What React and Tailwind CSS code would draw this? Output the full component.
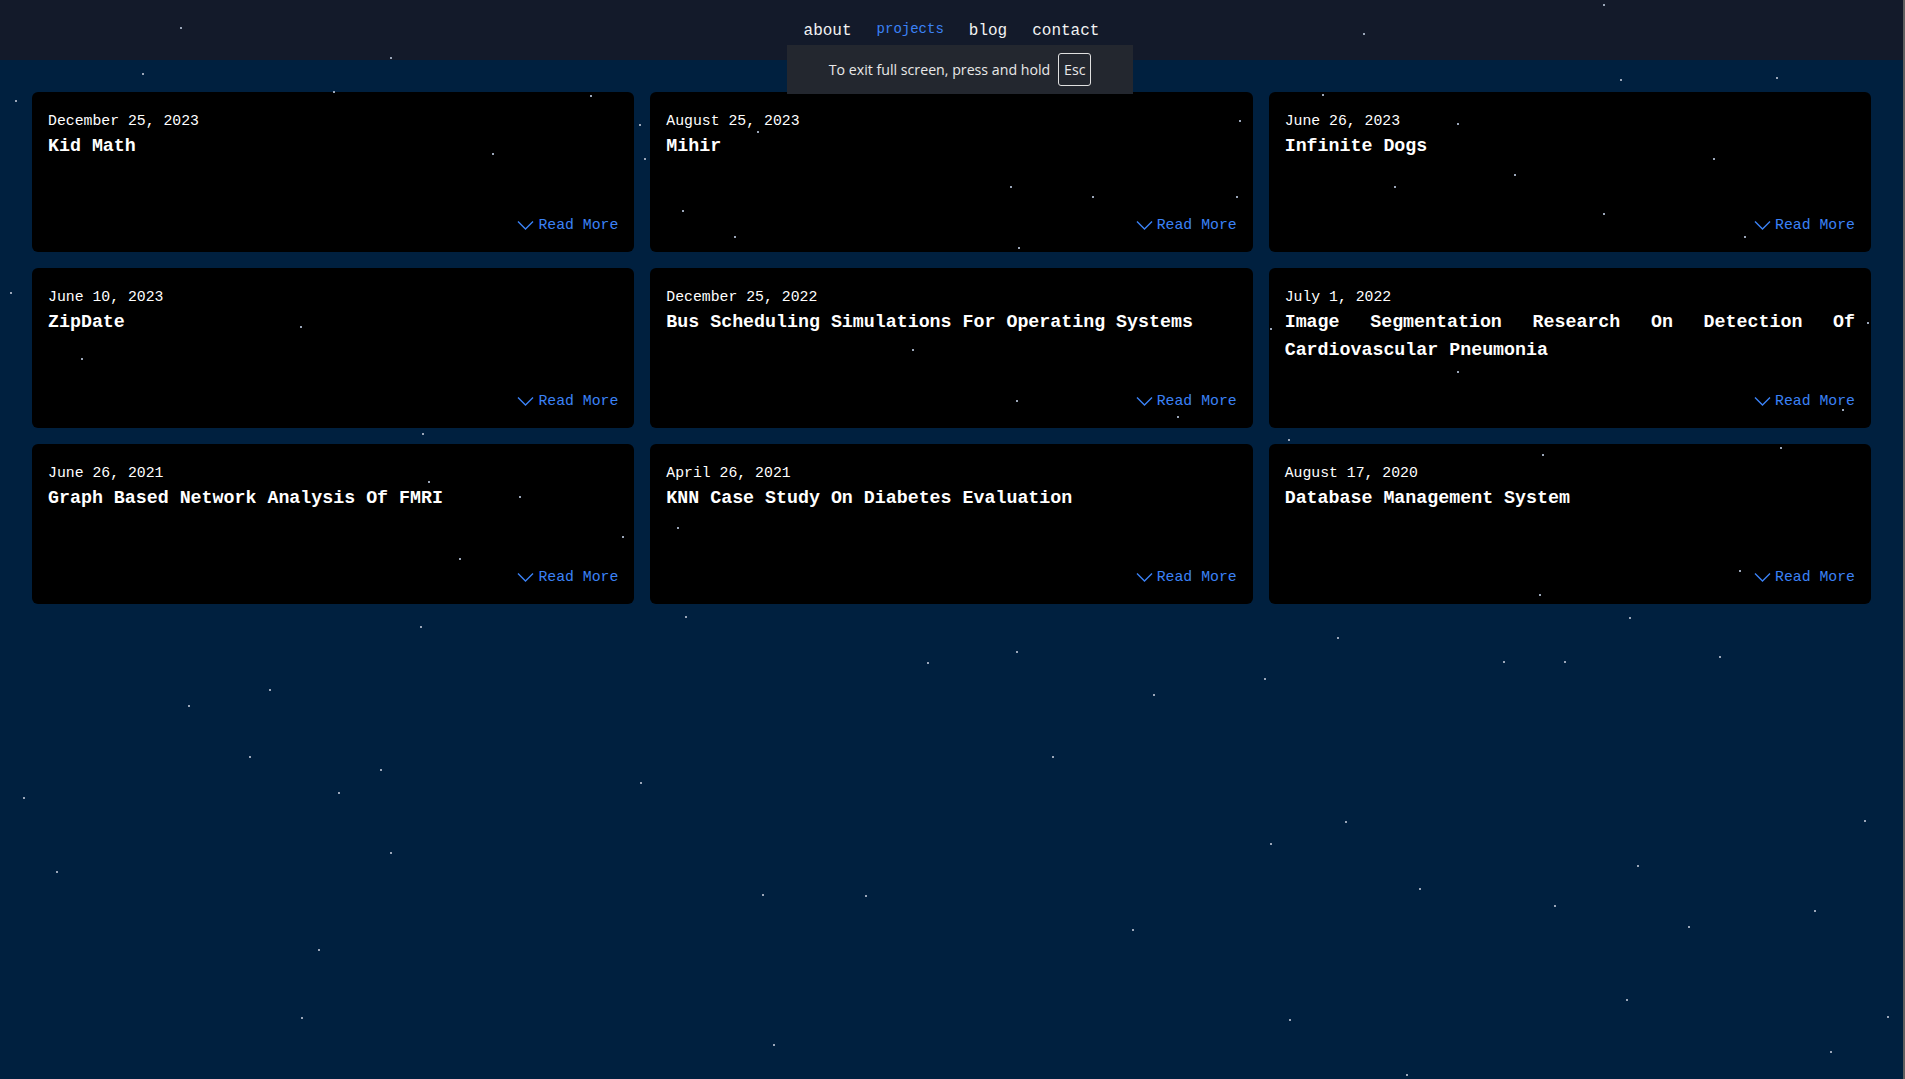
import React from 'react';

const projects = [
  { date: 'December 25, 2023', title: 'Kid Math' },
  { date: 'August 25, 2023', title: 'Mihir' },
  { date: 'June 26, 2023', title: 'Infinite Dogs' },
  { date: 'June 10, 2023', title: 'ZipDate' },
  { date: 'December 25, 2022', title: 'Bus Scheduling Simulations For Operating Systems' },
  { date: 'July 1, 2022', title: 'Image Segmentation Research On Detection Of Cardiovascular Pneumonia' },
  { date: 'June 26, 2021', title: 'Graph Based Network Analysis Of FMRI' },
  { date: 'April 26, 2021', title: 'KNN Case Study On Diabetes Evaluation' },
  { date: 'August 17, 2020', title: 'Database Management System' },
];

// star field, measured on a 1568 wide copy, scaled up below
const stars = [
  [148, 22], [321, 47], [1319, 3], [1122, 27], [117, 60], [1333, 65], [1462, 63], [12, 82],
  [274, 75], [486, 78], [1088, 77], [526, 102], [405, 126], [530, 130], [623, 108], [1020, 99],
  [831, 153], [899, 161], [1017, 161], [561, 173], [604, 194], [838, 203], [1199, 101], [1410, 130],
  [1246, 143], [1147, 153], [1319, 175], [1435, 194], [8, 240], [247, 268], [67, 295], [751, 287],
  [1045, 270], [1537, 265], [1199, 305], [836, 329], [969, 342], [1516, 337], [347, 356], [1060, 361],
  [1465, 368], [1269, 374], [352, 396], [427, 408], [512, 441], [557, 434], [378, 459], [1431, 469],
  [1267, 489], [346, 515], [564, 507], [836, 536], [763, 545], [1100, 524], [1341, 508], [1237, 544],
  [1287, 544], [1415, 540], [1040, 558], [949, 571], [155, 580], [221, 567], [866, 622], [205, 622],
  [313, 633], [278, 652], [527, 644], [19, 656], [321, 701], [46, 717], [627, 736], [712, 737],
  [1045, 694], [1107, 676], [1168, 731], [1347, 712], [1279, 745], [1389, 762], [1493, 749], [1534, 675],
  [932, 765], [262, 781], [1338, 822], [248, 837], [636, 859], [1061, 839], [1157, 884], [1506, 865],
  [1553, 836],
];

const Chevron = () => (
  <svg width="17" height="10" viewBox="0 0 17 10" fill="none" className="shrink-0">
    <path d="M1 1.5 L8.5 9 L16 1.5" stroke="#3b82f6" strokeWidth="1.4" />
  </svg>
);

const Card = ({ date, title }) => (
  <div className="h-40 bg-black rounded-md flex flex-col pt-[19px] px-4 pb-[17px]">
    <div className="text-[14.8px] leading-5 text-white">{date}</div>
    <div className="mt-px text-[18.3px] leading-7 font-bold text-white text-justify">{title}</div>
    <div className="mt-auto flex justify-end items-center gap-1 text-[14.8px] leading-5 text-[#3b82f6]">
      <Chevron />
      <span>Read More</span>
    </div>
  </div>
);

export default function App() {
  return (
    <div
      className="relative flex h-screen w-full overflow-hidden bg-[#00203f]"
      style={{ fontFamily: '"Liberation Mono", "DejaVu Sans Mono", monospace' }}
    >
      <div className="flex-1 flex flex-col">
        <header className="h-[60px] bg-[#131a2a] flex items-center justify-center gap-[25px] pt-[2px]">
          <a className="text-base leading-6 text-[#f2f2f2]">about</a>
          <a className="text-sm leading-5 text-[#3b82f6] mb-1">projects</a>
          <a className="text-base leading-6 text-[#f2f2f2]">blog</a>
          <a className="text-base leading-6 text-[#f2f2f2]">contact</a>
        </header>
        <main className="grid grid-cols-3 gap-4 px-8 pt-8">
          {projects.map((p, i) => (
            <Card key={i} date={p.date} title={p.title} />
          ))}
        </main>
      </div>
      <div className="w-[2px] bg-[#5f5f5f]" />

      <div className="pointer-events-none absolute inset-0">
        {stars.map(([x, y], i) => (
          <span
            key={i}
            className="absolute w-[2px] h-[2px] bg-[#9aa6b8]"
            style={{ left: Math.round(x * 1.215), top: Math.round(y * 1.215) }}
          />
        ))}
      </div>

      <div
        className="absolute left-[787px] top-[45px] w-[346px] h-[49px] bg-[#23272f] flex items-center justify-center gap-2 text-[14.2px] text-[#e8e8e8]"
        style={{ fontFamily: '"Open Sans", "Noto Sans", sans-serif' }}
      >
        <span>To exit full screen, press and hold</span>
        <span className="w-[33px] h-[33px] border border-[#e0e0e0] rounded-[3px] flex items-center justify-center">
          Esc
        </span>
      </div>
    </div>
  );
}
